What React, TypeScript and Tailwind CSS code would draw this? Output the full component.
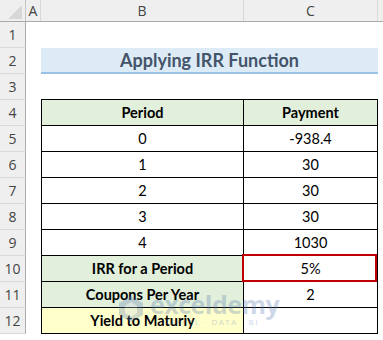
import React from "react";

type Row = {
  n: number;
  b?: string;
  c?: string;
  kind?: "title" | "head" | "data" | "label" | "yellow" | "top";
  red?: boolean;
};

const rows: Row[] = [
  { n: 1 },
  { n: 2, kind: "title", b: "Applying IRR Function" },
  { n: 3, kind: "top" },
  { n: 4, kind: "head", b: "Period", c: "Payment" },
  { n: 5, kind: "data", b: "0", c: "-938.4" },
  { n: 6, kind: "data", b: "1", c: "30" },
  { n: 7, kind: "data", b: "2", c: "30" },
  { n: 8, kind: "data", b: "3", c: "30" },
  { n: 9, kind: "data", b: "4", c: "1030" },
  { n: 10, kind: "label", b: "IRR for a Period", c: "5%", red: true },
  { n: 11, kind: "label", b: "Coupons Per Year", c: "2" },
  { n: 12, kind: "yellow", b: "Yield to Maturiy", c: "" },
];

const Watermark = () => (
  <div className="absolute left-[118px] top-[291px] flex items-start gap-[6px] opacity-30 pointer-events-none z-20">
    <svg width="26" height="28" viewBox="0 0 26 28" className="mt-[4px]">
      <path d="M13 1 L25 8 L25 20 L13 27 L1 20 L1 8 Z" fill="#5b7db5" />
      <path d="M13 7 L19 11 L19 18 L13 22 L7 18 L7 11 Z" fill="#c9d6ea" />
    </svg>
    <div className="flex flex-col items-center">
      <span className="font-['Open_Sans'] font-bold text-[25px] leading-[26px] text-[#5b7db5] tracking-[-0.5px]">
        exceldemy
      </span>
      <span className="font-['Open_Sans'] text-[8px] leading-[10px] tracking-[1.5px] text-[#5b7db5]">
        EXCEL · DATA · BI
      </span>
    </div>
  </div>
);

export default function App() {
  return (
    <div className="relative w-[383px] h-[340px] bg-white overflow-hidden font-['Lato'] text-black">
      {/* column header */}
      <div className="flex h-[22px] bg-[#efefef] border-b border-[#ababab] text-[14px] text-[#444] font-['Open_Sans']">
        <div className="relative w-[26px] border-r border-[#c6c6c6]">
          <div className="absolute left-[8px] top-[5px] w-0 h-0 border-l-[14px] border-l-transparent border-b-[14px] border-b-[#d7d7d7]" />
        </div>
        <div className="w-[15px] flex items-center justify-center border-r border-[#d9d9d9]">A</div>
        <div className="w-[203px] flex items-center justify-center border-r border-[#d9d9d9]">B</div>
        <div className="w-[134px] flex items-center justify-center border-r border-[#d9d9d9]">C</div>
        <div className="flex-1" />
      </div>

      {rows.map((r) => (
        <div key={r.n} className="flex h-[26px]">
          <div className="w-[26px] shrink-0 bg-[#efefef] border-r border-[#ababab] border-b border-b-[#d9d9d9] flex items-center justify-center text-[14px] text-[#444] font-['Open_Sans']">
            {r.n}
          </div>
          <div className="w-[15px] shrink-0" />
          {r.kind === "title" ? (
            <div className="w-[337px] shrink-0 bg-[#ddebf7] border-b-2 border-[#9bc2e6] flex items-center justify-center text-[18px] font-bold text-[#44546a] pt-[1px]">
              {r.b}
            </div>
          ) : r.kind === "top" ? (
            <div className="w-[337px] shrink-0 border-b border-black" />
          ) : r.kind ? (
            <>
              <div
                className={`w-[203px] shrink-0 border-l border-r border-b border-black flex items-center justify-center text-[14.5px] ${
                  r.kind === "head" || r.kind === "label"
                    ? "bg-[#e2efda] font-bold"
                    : r.kind === "yellow"
                    ? "bg-[#ffffcc] font-bold"
                    : ""
                }`}
              >
                {r.b}
              </div>
              <div
                className={`relative w-[134px] shrink-0 border-r border-b border-black flex items-center justify-center text-[14.5px] ${
                  r.kind === "head" ? "bg-[#e2efda] font-bold" : ""
                }`}
              >
                {r.c}
                {r.red && (
                  <div className="absolute -left-[2px] -top-[2px] right-0 -bottom-[1px] border-2 border-[#c00000] z-10" />
                )}
              </div>
            </>
          ) : null}
        </div>
      ))}

      <Watermark />
    </div>
  );
}
